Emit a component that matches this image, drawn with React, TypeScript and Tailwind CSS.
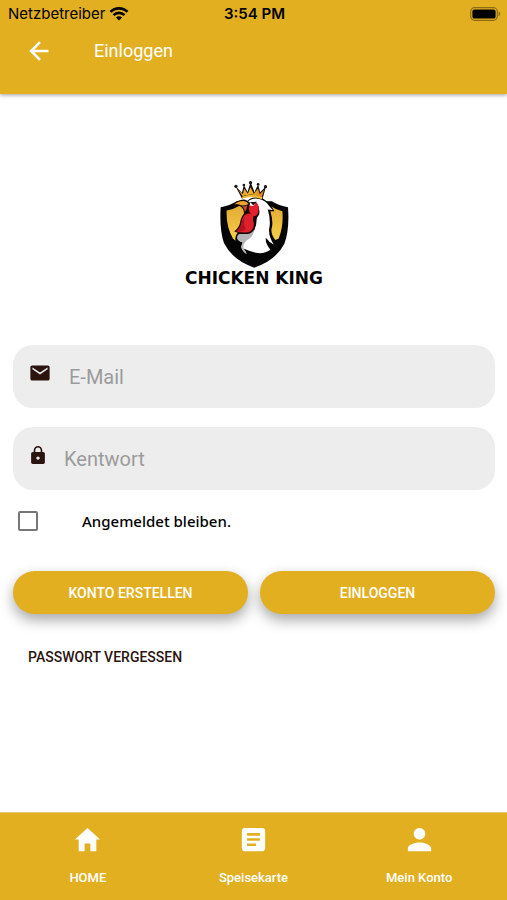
import React from 'react';
import { IoMdHome, IoMdPerson, IoMdMail, IoMdLock } from 'react-icons/io';
import { MdArticle } from 'react-icons/md';

const tabs = [
  { label: 'HOME', icon: IoMdHome },
  { label: 'Speisekarte', icon: MdArticle },
  { label: 'Mein Konto', icon: IoMdPerson },
];

const WifiIcon = () => (
  <svg viewBox="0 0 20 14" className="w-5 h-3.5" aria-hidden="true">
    <path d="M10 13.6 6.9 10.5a4.4 4.4 0 0 1 6.2 0z" />
    <path d="M4.5 8.1a7.8 7.8 0 0 1 11 0M1.5 4.9a12 12 0 0 1 17 0" fill="none" stroke="#000" strokeWidth="2.6" />
  </svg>
);

const BatteryIcon = () => (
  <svg viewBox="0 0 31 14" className="w-[31px] h-3.5" aria-hidden="true">
    <rect x="0.7" y="0.7" width="26.6" height="12.6" rx="4" fill="none" stroke="#8d6c16" strokeWidth="1.2" />
    <rect x="2.4" y="2.4" width="23.2" height="9.2" rx="2.2" />
    <path d="M28.6 4.6c2.2 1 2.2 3.8 0 4.8z" fill="#8d6c16" />
  </svg>
);

const BackIcon = () => (
  <svg viewBox="0 0 20 20" className="size-5" fill="none" stroke="currentColor" strokeWidth="2.6" aria-hidden="true">
    <path d="M19.5 10H2.5M11 1.2 2.2 10l8.8 8.8" />
  </svg>
);

const Logo = () => (
  <svg viewBox="130 25 220 275" className="w-[73px] h-[92px]" aria-hidden="true">
    <defs>
      <linearGradient id="crown" x1="0" x2="1">
        <stop offset="0" stopColor="#d9852a" />
        <stop offset="0.4" stopColor="#f4b92f" />
        <stop offset="1" stopColor="#dc7a22" />
      </linearGradient>
      <linearGradient id="field" x1="0" y1="0" x2="0" y2="1">
        <stop offset="0" stopColor="#e2ab36" />
        <stop offset="1" stopColor="#f8cf45" />
      </linearGradient>
    </defs>
    {/* shield */}
    <path d="M138 112 Q165 108 186 94 H292 Q314 108 341 112 Q346 180 330 222 Q305 272 239 294 Q172 270 148 220 Q134 180 138 112z" fill="#050505" />
    <path d="M156 122 Q178 118 198 106 L284 106 Q302 118 324 124 Q328 168 313 206 L300 212 L182 212 L175 206 Q154 170 156 122z" fill="url(#field)" />
    {/* neck */}
    <path d="M216 98 Q224 80 252 82 Q282 88 300 124 L288 124 Q298 160 291 178 Q290 196 304 212 L300 240 L206 260 L184 216 Q178 200 190 188 L230 176z" fill="#050505" />
    <path d="M218 97 Q232 82 254 87 Q274 92 284 108 L295 120 L280 119 Q290 152 284 178 Q282 200 298 224 Q284 218 274 204 Q272 222 288 240 Q268 254 244 249 Q224 244 207 236 Q214 246 216 253 Q203 244 200 232 L206 216 Q194 218 188 206 Q224 204 238 184 Q250 160 246 130 L252 110z" fill="#fff" />
    <path d="M188 206 Q186 196 196 192 Q226 196 240 170 Q240 202 216 212 Q204 222 207 236 Q216 246 216 253 Q203 244 200 232 L204 214 Q192 216 188 206z" fill="#b5b5b7" />
    {/* comb and wattle */}
    <path d="M212 104 Q224 92 246 98 Q258 116 254 134 Q248 144 242 150 Q246 182 226 191 Q204 197 179 185 Q194 172 196 160 Q199 140 210 130z" fill="#1a0506" />
    <path d="M226 106 Q240 94 250 102 Q256 120 249 132 Q240 144 230 134 Q218 118 226 106z" fill="#e21f2d" />
    <path d="M211 135 Q226 126 237 138 Q234 150 238 162 Q238 182 222 187 Q202 191 185 184 Q198 173 200 161 Q202 143 211 135z" fill="#df202c" />
    <path d="M212 142 Q204 158 214 178 Q200 188 185 184 Q198 173 200 161 Q203 147 212 142z" fill="#b3131f" />
    <path d="M224 98 L242 101 L236 108 L224 107z" fill="#fff" />
    <path d="M228 98 L247 95 L236 106z" fill="#111" />
    {/* beak */}
    <path d="M176 110 Q182 91 206 89 Q220 90 227 101 Q222 118 208 136 Q210 117 198 110 Q188 104 176 110z" fill="#170b05" />
    <path d="M180 104 Q188 93 207 93 Q218 94 222 102 Q204 111 194 104 Q186 101 180 104z" fill="#f1a42d" />
    <path d="M202 110 Q212 110 218 106 Q217 116 211 126 Q210 114 202 110z" fill="#cf4b25" />
    {/* crown */}
    <path d="M182 47 L202 68 L208 45 L219 66 L228 36 L240 66 L251 43 L257 67 L275 49 L264 88 Q232 72 202 86z" fill="#15100a" />
    <path d="M191 60 L205 72 L209 56 L220 71 L228 52 L238 71 L250 56 L256 72 L269 60 L262 81 Q232 67 204 79z" fill="url(#crown)" />
    <path d="M202 80 Q234 68 264 81 L262 88 Q232 76 204 86z" fill="#f3b935" />
    <g fill="#16181d">
      <circle cx="184" cy="49" r="5" />
      <circle cx="208" cy="45" r="4" />
      <circle cx="228" cy="38" r="5" />
      <circle cx="251" cy="43" r="4" />
      <circle cx="273" cy="50" r="5" />
    </g>
  </svg>
);

const App = () => {
  return (
    <div className="flex flex-col min-h-screen bg-white font-[Roboto,sans-serif]">
      <header className="relative bg-[#e2af20] shadow-[0_1px_4px_rgba(0,0,0,0.4)]">
        <div className="grid grid-cols-3 items-center h-7 pl-2 pr-1.5 text-black font-[Inter,sans-serif]">
          <div className="flex items-center gap-1 text-[15px]">
            <span>Netzbetreiber</span>
            <WifiIcon />
          </div>
          <span className="text-center text-[15px] font-semibold">3:54 PM</span>
          <div className="flex justify-end">
            <BatteryIcon />
          </div>
        </div>
        <div className="flex items-center gap-10 h-[66px] px-6 pb-5 text-white">
          <button type="button" aria-label="Zurück" className="p-[5px]">
            <BackIcon />
          </button>
          <h1 className="text-lg">Einloggen</h1>
        </div>
      </header>

      <main className="flex-1 pl-[13px] pr-3 pt-[84px]">
        <div className="flex flex-col items-center">
          <Logo />
          <p className="text-[17px] leading-4 font-bold text-black font-['DejaVu_Sans',sans-serif]">CHICKEN KING</p>
        </div>

        <form className="mt-[59px]" onSubmit={(e) => e.preventDefault()}>
          <label className="flex items-center gap-[18px] h-[63px] px-4 rounded-[20px] bg-[#ededed]">
            <IoMdMail size={22} className="mb-2 shrink-0 text-[#2b140e]" />
            <input type="email" placeholder="E-Mail" aria-label="E-Mail" className="flex-1 min-w-0 bg-transparent text-xl outline-none placeholder:text-[#9b9b9b]" />
          </label>
          <label className="flex items-center gap-[15px] h-[63px] mt-[19px] px-3.5 rounded-[20px] bg-[#ededed]">
            <IoMdLock size={22} className="mb-2 shrink-0 text-[#2b140e]" />
            <input type="password" placeholder="Kentwort" aria-label="Kentwort" className="flex-1 min-w-0 bg-transparent text-xl outline-none placeholder:text-[#9b9b9b]" />
          </label>

          <label className="flex items-center gap-11 h-5 mt-[21px] pl-[5px] text-[15px] font-medium text-black font-['Noto_Sans',sans-serif]">
            <input type="checkbox" className="appearance-none size-5 border-2 border-[#777] rounded-xs" />
            Angemeldet bleiben.
          </label>

          <div className="grid grid-cols-2 gap-3 mt-10">
            <button type="button" className="h-[43px] rounded-full bg-[#e2af20] text-sm font-medium text-white shadow-[0_6px_14px_rgba(0,0,0,0.35)]">
              KONTO ERSTELLEN
            </button>
            <button type="submit" className="h-[43px] rounded-full bg-[#e2af20] text-sm font-medium text-white shadow-[0_6px_14px_rgba(0,0,0,0.35)]">
              EINLOGGEN
            </button>
          </div>
        </form>

        <a href="#passwort" className="inline-block mt-[33px] ml-[15px] text-sm font-medium text-[#2b140e]">
          PASSWORT VERGESSEN
        </a>
      </main>

      <nav className="grid grid-cols-3 h-[88px] px-[5px] border-t border-[#dfc883] bg-[#e2af20]">
        {tabs.map(({ label, icon: Icon }) => (
          <a key={label} href="#" className="flex flex-col items-center gap-[13px] pt-[11px] text-white">
            <Icon size={31} />
            <span className="text-[13px] font-medium">{label}</span>
          </a>
        ))}
      </nav>
    </div>
  );
};

export default App;
